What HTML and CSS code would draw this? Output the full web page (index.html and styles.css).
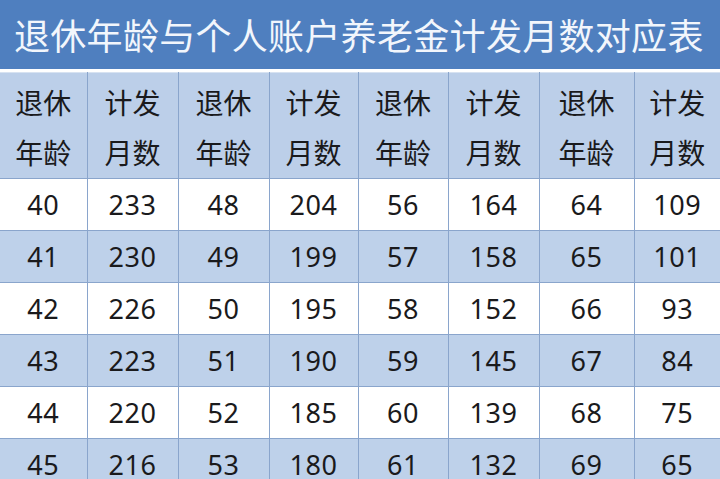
FILE: index.html
```html
<!DOCTYPE html>
<html lang="zh-CN">
<head>
<meta charset="utf-8">
<title>退休年龄与个人账户养老金计发月数对应表</title>
<link rel="stylesheet" href="styles.css">
</head>
<body>
<div class="page">
  <div class="title">退休年龄与个人账户养老金计发月数对应表</div>
  <table class="grid">
    <colgroup>
      <col class="c1"><col class="c2"><col class="c3"><col class="c4">
      <col class="c5"><col class="c6"><col class="c7"><col class="c8">
    </colgroup>
    <thead>
      <tr class="head">
        <th>退休<br>年龄</th><th>计发<br>月数</th>
        <th>退休<br>年龄</th><th>计发<br>月数</th>
        <th>退休<br>年龄</th><th>计发<br>月数</th>
        <th>退休<br>年龄</th><th>计发<br>月数</th>
      </tr>
    </thead>
    <tbody>
      <tr class="odd"><td>40</td><td>233</td><td>48</td><td>204</td><td>56</td><td>164</td><td>64</td><td>109</td></tr>
      <tr class="even"><td>41</td><td>230</td><td>49</td><td>199</td><td>57</td><td>158</td><td>65</td><td>101</td></tr>
      <tr class="odd"><td>42</td><td>226</td><td>50</td><td>195</td><td>58</td><td>152</td><td>66</td><td>93</td></tr>
      <tr class="even"><td>43</td><td>223</td><td>51</td><td>190</td><td>59</td><td>145</td><td>67</td><td>84</td></tr>
      <tr class="odd"><td>44</td><td>220</td><td>52</td><td>185</td><td>60</td><td>139</td><td>68</td><td>75</td></tr>
      <tr class="even"><td>45</td><td>216</td><td>53</td><td>180</td><td>61</td><td>132</td><td>69</td><td>65</td></tr>
    </tbody>
  </table>
</div>
</body>
</html>
```
FILE: styles.css
```css
html, body {
  margin: 0;
  padding: 0;
  background: #ffffff;
}
body {
  width: 720px;
  height: 479px;
  overflow: hidden;
  font-family: "Noto Sans CJK SC", "Noto Sans", sans-serif;
  color: #1a1a1c;
}
.page {
  display: flex;
  flex-direction: column;
  gap: 3px;
}
.title {
  height: 69px;
  background: #4f7fbf;
  color: #f2f6fc;
  font-size: 36px;
  line-height: 69px;
  padding-left: 14px;
  letter-spacing: 0.3px;
  white-space: nowrap;
}
.grid {
  width: 720px;
  border-collapse: collapse;
  table-layout: fixed;
}
.c1 { width: 87px; }
.c2 { width: 91px; }
.c3 { width: 91px; }
.c4 { width: 89px; }
.c5 { width: 90px; }
.c6 { width: 91px; }
.c7 { width: 95px; }
.c8 { width: 86px; }
.grid th, .grid td {
  border: 1px solid #8aa5cc;
  text-align: center;
  padding: 0;
}
.grid tr:first-child th { border-top-color: #d7e2f1; }
.grid th:first-child, .grid td:first-child { border-left: none; }
.grid th:last-child, .grid td:last-child { border-right: none; }
.head th {
  height: 103px;
  background: #bccfe9;
  font-weight: 400;
  font-size: 28px;
  line-height: 50px;
  padding-top: 2px;
}
.grid td {
  height: 51px;
  font-family: "Noto Sans", "Noto Sans CJK SC", sans-serif;
  font-size: 27px;
  line-height: 30px;
  letter-spacing: 0.5px;
}
.odd td { background: #ffffff; }
.even td { background: #bed1ea; }
```
